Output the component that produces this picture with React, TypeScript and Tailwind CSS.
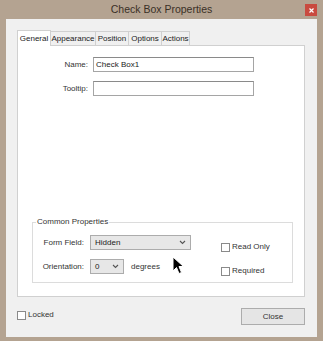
import React from 'react';

const FONT = { fontFamily: '"Liberation Sans", Arial, sans-serif' };

function Chevron() {
  return (
    <svg width="7" height="5" viewBox="0 0 7 5" className="shrink-0">
      <path d="M1 1 L3.5 3.5 L6 1" fill="none" stroke="#555" strokeWidth="1.1" />
    </svg>
  );
}

function Select({ value, width }: { value: string; width: string }) {
  return (
    <div className={`${width} h-[15px] border border-[#acacac] bg-[#e7e7e7] flex items-center justify-between pl-[4px] pr-[4px] text-[8px] text-[#222]`}>
      <span>{value}</span>
      <Chevron />
    </div>
  );
}

function Check({ label }: { label: string }) {
  return (
    <div className="flex items-center gap-[2px] text-[8px] text-[#333]">
      <div className="w-[9px] h-[9px] border border-[#8a8a8a] bg-white" />
      <span>{label}</span>
    </div>
  );
}

const TABS = [
  { label: 'Appearance', w: 'w-[45px]' },
  { label: 'Position', w: 'w-[33px]' },
  { label: 'Options', w: 'w-[33px]' },
  { label: 'Actions', w: 'w-[28px]' },
];

export default function App() {
  return (
    <div style={FONT} className="w-[323px] h-[341px] bg-[#b4a391] flex flex-col overflow-hidden relative">
      {/* Title bar */}
      <div className="h-[19px] flex items-center justify-center relative">
        <span className="text-[10.5px] text-[#3a3026]">Check Box Properties</span>
        <div className="absolute right-[6px] top-[4px] w-[12px] h-[12px] bg-[#c94a3f] flex items-center justify-center">
          <svg width="5" height="5" viewBox="0 0 5 5">
            <path d="M0.5 0.5 L4.5 4.5 M4.5 0.5 L0.5 4.5" stroke="#fff" strokeWidth="1.2" />
          </svg>
        </div>
      </div>

      {/* Client area */}
      <div className="flex-1 mx-[6px] mb-[4px] bg-[#f0f0f0] flex flex-col pl-[11px] pr-[12px] pt-[10px]">
        {/* Tabs */}
        <div className="flex items-end h-[16px] text-[8px] text-[#222]">
          <div className="h-[16px] w-[34px] bg-white border border-b-0 border-[#d0d0d0] flex items-center justify-center relative top-[1px] z-10">
            General
          </div>
          {TABS.map(t => (
            <div key={t.label} className={`${t.w} h-[14px] bg-[#f0f0f0] border border-l-0 border-b-0 border-[#d0d0d0] flex items-center justify-center whitespace-nowrap`}>
              {t.label}
            </div>
          ))}
        </div>

        {/* Panel */}
        <div className="h-[252px] bg-white border border-[#d0d0d0] flex flex-col relative">
          <div className="flex flex-col gap-[9px] pt-[11px] text-[8px] text-[#333]">
            <div className="flex items-center">
              <div className="w-[70px] text-right">Name:</div>
              <div className="ml-[5px] w-[161px] h-[15px] border border-[#a5a5a5] border-t-[#8a8a8a] flex items-center pl-[2px] text-[#222]">
                Check Box1
              </div>
            </div>
            <div className="flex items-center">
              <div className="w-[70px] text-right">Tooltip:</div>
              <div className="ml-[5px] w-[161px] h-[15px] border border-[#a5a5a5] border-t-[#8a8a8a]" />
            </div>
          </div>

          {/* Common Properties */}
          <div className="mt-auto mb-[13px] ml-[14px] w-[261px] h-[61px] border border-[#dcdcdc] relative text-[8px] text-[#333] flex">
            <span className="absolute left-[3px] top-[-6px] bg-white px-[1px] leading-[10px]">Common Properties</span>
            <div className="flex flex-col gap-[9px] pt-[12px] w-[188px]">
              <div className="flex items-center">
                <div className="w-[51px] text-right">Form Field:</div>
                <div className="ml-[6px]">
                  <Select value="Hidden" width="w-[101px]" />
                </div>
              </div>
              <div className="flex items-center">
                <div className="w-[51px] text-right">Orientation:</div>
                <div className="ml-[6px]">
                  <Select value="0" width="w-[34px]" />
                </div>
                <span className="ml-[7px]">degrees</span>
              </div>
            </div>
            <div className="flex flex-col gap-[12px] pt-[18px]">
              <Check label="Read Only" />
              <Check label="Required" />
            </div>
          </div>
        </div>

        {/* Footer */}
        <div className="flex items-start justify-between mt-[11px]">
          <div className="mt-[1px]">
            <Check label="Locked" />
          </div>
          <div className="w-[64px] h-[17px] border border-[#acacac] bg-[#e5e5e5] flex items-center justify-center text-[8px] text-[#333]">
            Close
          </div>
        </div>
      </div>

      {/* Mouse cursor */}
      <svg className="absolute left-[172px] top-[256px]" width="13" height="20" viewBox="0 0 13 20">
        <path d="M1 1 L1 15 L4.5 11.5 L7 17.5 L9.5 16.5 L7 10.5 L11.5 10.5 Z" fill="#000" stroke="#fff" strokeWidth="1" strokeLinejoin="miter" />
      </svg>
    </div>
  );
}
